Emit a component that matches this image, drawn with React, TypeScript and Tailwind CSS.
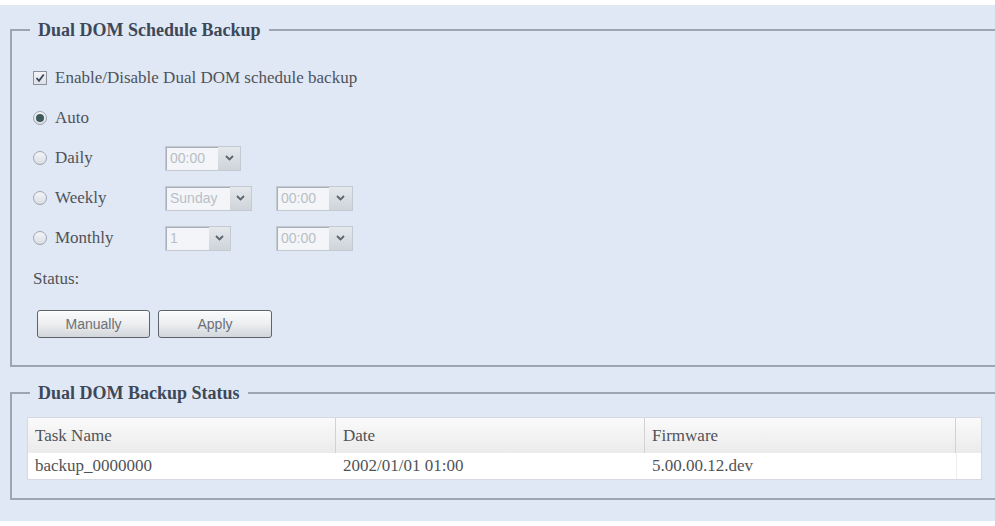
import React from "react";

function Radio({ checked }: { checked?: boolean }) {
  return (
    <div className="w-[14px] h-[14px] rounded-full border border-[#9ea5ae] bg-gradient-to-b from-[#f4f5f7] to-[#d9dde2] flex items-center justify-center shrink-0">
      {checked && <div className="w-[8px] h-[8px] rounded-full bg-[#3f5a5c]" />}
    </div>
  );
}

function Select({ w, tw, text }: { w: number; tw: number; text: string }) {
  return (
    <div className="flex h-[25px] border border-[#c4cad2] bg-[#dde2e8]" style={{ width: w }}>
      <div
        className="h-full border-t border-l border-[#a9b0b9] bg-[#f3f5f8] flex items-center pl-[3px] text-[14px] text-[#b9bfc7] font-['Liberation_Sans',Arial,sans-serif] overflow-hidden whitespace-nowrap"
        style={{ width: tw }}
      >
        {text}
      </div>
      <div className="flex-1 h-full bg-gradient-to-b from-[#e4e8ec] to-[#cfd4da] flex items-center justify-center">
        <svg width="9" height="6" viewBox="0 0 9 6">
          <path d="M1 1 L4.5 4.5 L8 1" fill="none" stroke="#5d646c" strokeWidth="1.8" />
        </svg>
      </div>
    </div>
  );
}

function Btn({ label, w }: { label: string; w: number }) {
  return (
    <div
      className="h-[28px] rounded-[3px] border border-[#5d636b] bg-gradient-to-b from-[#fbfbfc] via-[#eceef0] to-[#d3d6da] shadow-[inset_0_1px_0_#ffffff] flex items-center justify-center text-[14px] text-[#6c7076] font-['Liberation_Sans',Arial,sans-serif]"
      style={{ width: w }}
    >
      {label}
    </div>
  );
}

export default function App() {
  return (
    <div className="w-[995px] h-[526px] bg-white overflow-hidden font-['Liberation_Serif','Times_New_Roman',serif] text-[17px] text-[#4f5358]">
      <div className="mt-[5px] h-[516px] bg-[#e0e8f6] pt-[15px] overflow-hidden">
        <fieldset className="ml-[10px] mr-[-20px] border-2 border-[#9ba5b3] pl-[21px] pt-[18px] pb-[27px]">
          <legend className="ml-[-3px] px-2 leading-[20px] text-[18px] font-bold text-[#3d4858]">
            Dual DOM Schedule Backup
          </legend>
          <div className="h-[40px] flex items-center gap-[8px]">
            <div className="w-[14px] h-[14px] border border-[#8c929b] bg-gradient-to-b from-[#f4f5f7] to-[#dde0e4] flex items-center justify-center">
              <svg width="10" height="10" viewBox="0 0 10 10">
                <path d="M1.5 5 L4 7.8 L8.8 1.5" fill="none" stroke="#3b4660" strokeWidth="1.8" />
              </svg>
            </div>
            <span>Enable/Disable Dual DOM schedule backup</span>
          </div>
          <div className="h-[40px] flex items-center gap-[8px]">
            <Radio checked />
            <span>Auto</span>
          </div>
          <div className="h-[40px] flex items-center">
            <div className="w-[132px] flex items-center gap-[8px]">
              <Radio />
              <span>Daily</span>
            </div>
            <Select w={76} tw={52} text="00:00" />
          </div>
          <div className="h-[40px] flex items-center">
            <div className="w-[132px] flex items-center gap-[8px]">
              <Radio />
              <span>Weekly</span>
            </div>
            <Select w={87} tw={64} text="Sunday" />
            <div className="w-[24px]" />
            <Select w={77} tw={52} text="00:00" />
          </div>
          <div className="h-[40px] flex items-center">
            <div className="w-[132px] flex items-center gap-[8px]">
              <Radio />
              <span>Monthly</span>
            </div>
            <Select w={66} tw={43} text="1" />
            <div className="w-[45px]" />
            <Select w={77} tw={52} text="00:00" />
          </div>
          <div className="h-[42px] flex items-center">Status:</div>
          <div className="mt-[10px] ml-[4px] flex gap-[8px]">
            <Btn label="Manually" w={113} />
            <Btn label="Apply" w={114} />
          </div>
        </fieldset>

        <fieldset className="mt-[16px] ml-[10px] mr-[-20px] border-2 border-[#9ba5b3] pl-[15px] pt-[14px] pb-[18px]">
          <legend className="ml-[3px] px-2 leading-[20px] text-[18px] font-bold text-[#3d4858]">
            Dual DOM Backup Status
          </legend>
          <div className="w-[955px] border border-[#d6dae0] bg-white">
            <div className="grid grid-cols-[308px_309px_311px_25px] h-[35px] bg-gradient-to-b from-[#fafafa] to-[#ebebeb]">
              <div className="flex items-center pl-[7px] border-r border-[#d2d2d2]">Task Name</div>
              <div className="flex items-center pl-[7px] border-r border-[#d2d2d2]">Date</div>
              <div className="flex items-center pl-[7px] border-r border-[#d2d2d2]">Firmware</div>
              <div />
            </div>
            <div className="grid grid-cols-[308px_309px_311px_25px] h-[26px] bg-white">
              <div className="flex items-center pl-[7px]">backup_0000000</div>
              <div className="flex items-center pl-[7px]">2002/01/01 01:00</div>
              <div className="flex items-center pl-[7px]">5.00.00.12.dev</div>
              <div className="border-l border-[#eeeeee]" />
            </div>
          </div>
        </fieldset>
      </div>
    </div>
  );
}
